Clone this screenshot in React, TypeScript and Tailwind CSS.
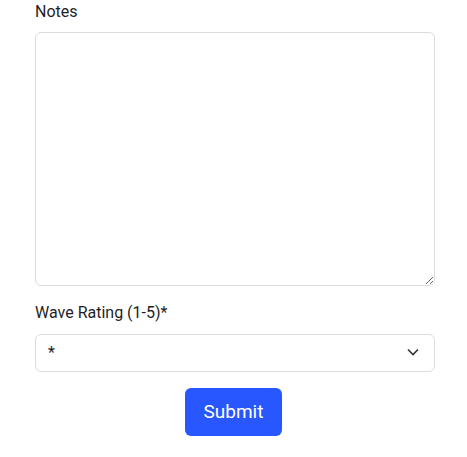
export default function App() {
  return (
    <div className="w-[467px] h-[457px] bg-white px-[35px] font-['Roboto','Liberation_Sans',sans-serif] text-[#1f1f1f]">
      <form className="flex flex-col">
        <label className="block pt-[2px] text-[16px] leading-[20px]">Notes</label>
        <textarea className="mt-[10px] block h-[254px] w-[400px] rounded-[6px] border border-[#dcdcdf] bg-white p-3 text-[16px] outline-none" />
        <label className="mt-[17px] block text-[16px] leading-[20px]">Wave Rating (1-5)*</label>
        <div className="relative mt-[11px] h-[38px] w-[400px]">
          <select className="h-full w-full appearance-none rounded-[6px] border border-[#dcdcdf] bg-white pl-3 text-[16px] text-[#1f1f1f] outline-none">
            <option>*</option>
          </select>
          <svg
            className="pointer-events-none absolute right-[16px] top-[14px]"
            width="12"
            height="8"
            viewBox="0 0 12 8"
            fill="none"
            stroke="#333"
            strokeWidth="1.6"
          >
            <path d="M1 1.5l5 5 5-5" />
          </svg>
        </div>
        <div className="mt-[16px] flex justify-center">
          <button
            type="button"
            className="h-[48px] w-[97px] rounded-[6px] bg-[#2857ff] text-[19px] text-white"
          >
            Submit
          </button>
        </div>
      </form>
    </div>
  );
}
